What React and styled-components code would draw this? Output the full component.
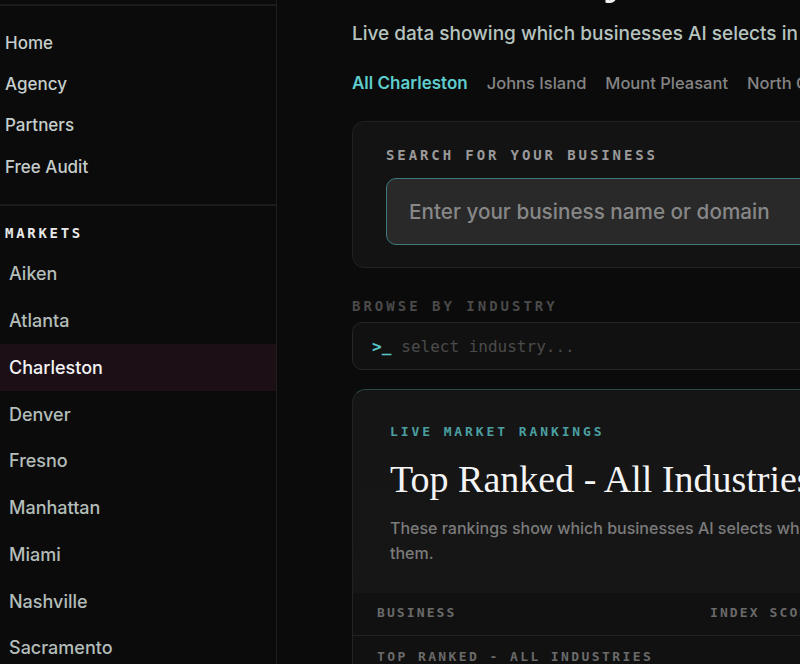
import React from "react";
import styled, { createGlobalStyle } from "styled-components";

const Global = createGlobalStyle`
  html, body { margin: 0; padding: 0; background: #0b0b0b; }
  body { overflow: hidden; font-family: Inter, "Noto Sans", sans-serif; }
  * { box-sizing: border-box; }
`;

const mono = `"DejaVu Sans Mono", "Liberation Mono", monospace`;

const Layout = styled.div`
  display: flex;
  width: 800px;
  height: 664px;
  overflow: hidden;
  background: #0b0b0b;
`;

const Sidebar = styled.aside`
  width: 277px;
  flex-shrink: 0;
  border-right: 1px solid #1d1d1d;
  display: flex;
  flex-direction: column;
  padding-top: 4px;
`;

const Section = styled.div`
  padding: ${(p) => p.$pad};
  border-top: 2px solid #1c1c1c;
  display: flex;
  flex-direction: column;
`;

const NavLink = styled.a`
  height: 41.4px;
  display: flex;
  align-items: center;
  padding-left: 5px;
  font-size: 17px;
  font-weight: 500;
  color: #c6cecc;
  text-decoration: none;
`;

const SideLabel = styled.div`
  font-family: ${mono};
  font-weight: 700;
  font-size: 14px;
  letter-spacing: 2.7px;
  line-height: 18px;
  color: #e8e8e8;
  padding-left: 5px;
  margin-bottom: 9px;
`;

const Market = styled.a`
  height: 46.75px;
  display: flex;
  align-items: center;
  padding-left: 9px;
  font-size: 18px;
  font-weight: 500;
  color: ${(p) => (p.$active ? "#f3f3f3" : "#b3bdba")};
  background: ${(p) => (p.$active ? "#1c0f16" : "transparent")};
  text-decoration: none;
`;

const Main = styled.main`
  flex: 1;
  min-width: 0;
  padding-left: 75px;
`;

const Content = styled.div`
  width: 760px;
  display: flex;
  flex-direction: column;
`;

const Title = styled.h1`
  margin: -60px 0 0;
  font-family: "Liberation Serif", serif;
  font-weight: 400;
  font-size: 56px;
  line-height: 64px;
  color: #f2f2f2;
  white-space: nowrap;
`;

const Subtitle = styled.p`
  margin: 16px 0 0;
  font-size: 19px;
  font-weight: 500;
  line-height: 28px;
  color: #b6c3bf;
  white-space: nowrap;
`;

const Tabs = styled.nav`
  display: flex;
  gap: 19px;
  margin-top: 23px;
  white-space: nowrap;
`;

const Tab = styled.span`
  font-size: ${(p) => (p.$active ? 17 : 16.5)}px;
  line-height: 24px;
  font-weight: ${(p) => (p.$active ? 600 : 500)};
  color: ${(p) => (p.$active ? "#5fcdcd" : "#858585")};
`;

const Card = styled.section`
  margin-top: 26px;
  background: #131313;
  border: 1px solid #212121;
  border-radius: 12px;
  padding: 24px 0 22px 33px;
`;

const Label = styled.div`
  font-family: ${mono};
  font-weight: 700;
  font-size: ${(p) => p.$size || 14}px;
  letter-spacing: ${(p) => p.$ls || 2.9}px;
  line-height: 18px;
  color: ${(p) => p.$color};
  white-space: nowrap;
`;

const Input = styled.div`
  margin-top: 14px;
  height: 67px;
  background: #292929;
  border: 1.5px solid #3d7a7b;
  border-radius: 10px;
  display: flex;
  align-items: center;
  padding-left: 22px;
  font-size: 20.7px;
  font-weight: 500;
  color: #878787;
  white-space: nowrap;
`;

const BrowseLabel = styled(Label)`
  margin-top: 29px;
`;

const Select = styled.div`
  margin-top: 7px;
  height: 48px;
  background: #111111;
  border: 1px solid #262626;
  border-radius: 10px;
  display: flex;
  align-items: center;
  gap: 10px;
  padding-left: 19px;
  font-family: ${mono};
  font-size: 16px;
  color: #4b4b4b;
`;

const Prompt = styled.span`
  color: #58c8c9;
  font-weight: 700;
`;

const Rankings = styled.section`
  margin-top: 19px;
  background: #141414;
  border: 1px solid #1f2425;
  border-top-color: #2d4a4b;
  border-radius: 14px;
  overflow: hidden;
`;

const RankHead = styled.div`
  padding: 33px 0 27px 37px;
  background: linear-gradient(#151515, #161616);
`;

const RankTitle = styled.h2`
  margin: 15px 0 0;
  font-family: "Liberation Serif", serif;
  font-weight: 400;
  font-size: 38px;
  line-height: 46px;
  color: #f4f4f4;
  white-space: nowrap;
`;

const Desc = styled.p`
  margin: 14px 0 0;
  font-size: 16px;
  font-weight: 500;
  line-height: 25px;
  color: #7b7b7b;
  white-space: nowrap;
`;

const Table = styled.div`
  background: #111111;
`;

const HeadRow = styled.div`
  display: grid;
  grid-template-columns: 333px 1fr;
  padding: 11px 24px 0;
  height: 43px;
  border-bottom: 1px solid #212121;
`;

const GroupRow = styled.div`
  padding: 12px 24px;
`;

const markets = [
  "Aiken",
  "Atlanta",
  "Charleston",
  "Denver",
  "Fresno",
  "Manhattan",
  "Miami",
  "Nashville",
  "Sacramento",
];

const tableLabel = { $color: "#6a6a6a", $size: 13 };

export default function App() {
  return (
    <>
      <Global />
      <Layout>
        <Sidebar>
          <Section $pad="16px 0 16px">
            {["Home", "Agency", "Partners", "Free Audit"].map((n) => (
              <NavLink key={n}>{n}</NavLink>
            ))}
          </Section>
          <Section $pad="18px 0 0">
            <SideLabel>MARKETS</SideLabel>
            {markets.map((m) => (
              <Market key={m} $active={m === "Charleston"}>
                {m}
              </Market>
            ))}
          </Section>
        </Sidebar>
        <Main>
          <Content>
            <Title>AI Visibility Index</Title>
            <Subtitle>
              Live data showing which businesses AI selects in Charleston right now.
            </Subtitle>
            <Tabs>
              <Tab $active>All Charleston</Tab>
              <Tab>Johns Island</Tab>
              <Tab>Mount Pleasant</Tab>
              <Tab>North Charleston</Tab>
            </Tabs>
            <Card>
              <Label $color="#9a9a9a">SEARCH FOR YOUR BUSINESS</Label>
              <Input>Enter your business name or domain</Input>
            </Card>
            <BrowseLabel $color="#4a4a4a" $ls={3}>BROWSE BY INDUSTRY</BrowseLabel>
            <Select>
              <Prompt>&gt;_</Prompt>
              <span>select industry...</span>
            </Select>
            <Rankings>
              <RankHead>
                <Label $color="#4b9fa1" $size={13} $ls={2.9}>
                  LIVE MARKET RANKINGS
                </Label>
                <RankTitle>Top Ranked - All Industries</RankTitle>
                <Desc>
                  These rankings show which businesses AI selects when customers ask for recommendations. Claim your spot before competitors take
                  <br />
                  them.
                </Desc>
              </RankHead>
              <Table>
                <HeadRow>
                  <Label {...tableLabel} $ls={2.1}>BUSINESS</Label>
                  <Label {...tableLabel} $ls={2.1}>INDEX SCORE</Label>
                </HeadRow>
                <GroupRow>
                  <Label {...tableLabel} $ls={2.4}>TOP RANKED - ALL INDUSTRIES</Label>
                </GroupRow>
              </Table>
            </Rankings>
          </Content>
        </Main>
      </Layout>
    </>
  );
}
